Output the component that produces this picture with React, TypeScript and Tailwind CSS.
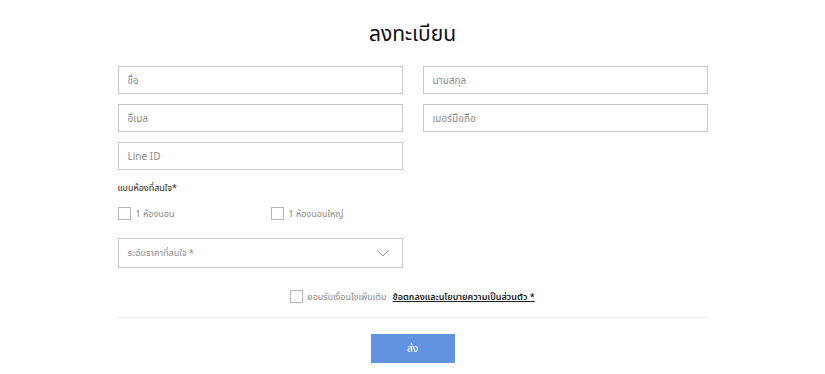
import React from "react";

const font = { fontFamily: '"Noto Sans", "Noto Sans Thai", "Liberation Sans", sans-serif' };

const Field = ({ placeholder }: { placeholder: string }) => (
    <input
        type="text"
        placeholder={placeholder}
        className="h-[28px] w-full border border-[#c8c8c8] px-[9px] text-[10px] text-[#333] placeholder:text-[#8a8a8a] outline-none"
    />
);

const Box = ({ className = "" }: { className?: string }) => (
    <span className={"inline-block w-[13px] h-[13px] border border-[#b5b5b5] bg-white " + className} />
);

export default function App() {
    return (
        <div className="w-full bg-white" style={font}>
            <div className="w-[590px] mx-auto pt-[17px]">
                <h1 className="text-center text-[21px] leading-[32px] text-[#111] mb-[17px]">ลงทะเบียน</h1>

                {/* ช่องกรอก */}
                <div className="grid grid-cols-2 gap-x-[20px] gap-y-[10px]">
                    <Field placeholder="ชื่อ" />
                    <Field placeholder="นามสกุล" />
                    <Field placeholder="อีเมล" />
                    <Field placeholder="เบอร์มือถือ" />
                    <Field placeholder="Line ID" />
                </div>

                <div className="mt-[11px] text-[9px] text-[#222] leading-[14px]">แบบห้องที่สนใจ*</div>

                <div className="flex mt-[12px] text-[9px] text-[#888]">
                    <label className="flex items-center gap-[5px] w-[153px]">
                        <Box />
                        <span>1 ห้องนอน</span>
                    </label>
                    <label className="flex items-center gap-[5px]">
                        <Box />
                        <span>1 ห้องนอนใหญ่</span>
                    </label>
                </div>

                <div className="grid grid-cols-2 gap-x-[20px] mt-[17px]">
                    <div className="h-[30px] border border-[#c8c8c8] flex items-center justify-between pl-[9px] pr-[12px]">
                        <span className="text-[9px] text-[#888]">ระดับราคาที่สนใจ *</span>
                        <svg width="14" height="8" viewBox="0 0 14 8" fill="none">
                            <path d="M1 1l6 6 6-6" stroke="#9a9a9a" strokeWidth="1" />
                        </svg>
                    </div>
                </div>

                <div className="flex items-center justify-center gap-[4px] mt-[22px] text-[9px]">
                    <Box />
                    <span className="text-[#888]">ยอมรับเงื่อนไขเพิ่มเติม</span>
                    <a className="text-[#222] underline font-semibold ml-[2px]">ข้อตกลงและนโยบายความเป็นส่วนตัว *</a>
                </div>

                <div className="border-t border-[#ececec] mt-[14px]" />

                <div className="flex justify-center mt-[16px]">
                    <button className="w-[84px] h-[29px] bg-[#6193e0] text-white text-[10px]">ส่ง</button>
                </div>
            </div>
        </div>
    );
}
